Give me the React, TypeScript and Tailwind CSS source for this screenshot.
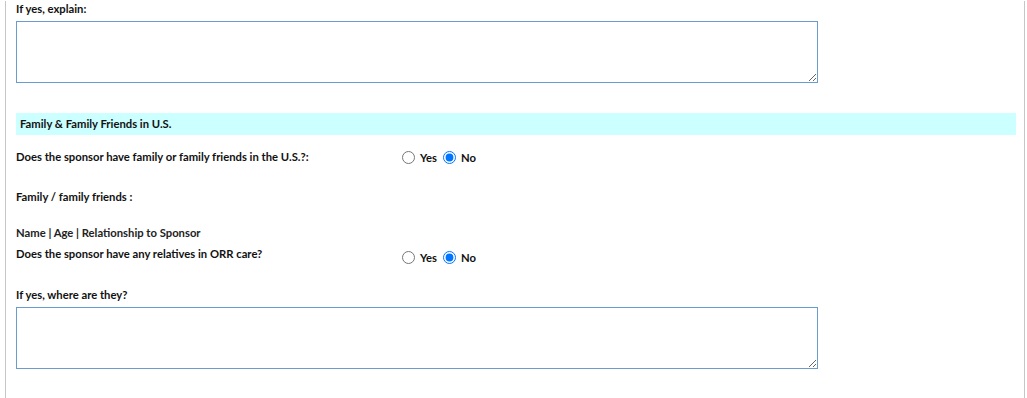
export default function App() {
  const font = { fontFamily: "Lato, 'Liberation Sans', sans-serif" }

  return (
    <div className="min-h-[398px] bg-white" style={font}>
      <div className="ml-[5px] w-[1020px] min-h-[398px] border-x border-[#c6c6c6] pl-[10px] pr-[8px] text-[11.25px] font-bold text-[#111]">
        {/* Explain */}
        <div className="h-[16px] leading-[16px] mt-[1px]">If yes, explain:</div>
        <textarea className="mt-[4px] block w-[802px] h-[62px] border border-[#6a9bd1] outline-none resize" />

        {/* Section header */}
        <div className="mt-[30px] h-[22px] bg-[#ccffff] pl-[4px] leading-[22px]">
          Family &amp; Family Friends in U.S.
        </div>

        <div className="mt-[14px] flex h-[16px] items-center">
          <div className="w-[386px]">Does the sponsor have family or family friends in the U.S.?:</div>
          <label className="flex items-center gap-[5px]">
            <input type="radio" name="fam" className="m-0 h-[13px] w-[13px]" />
            <span className="mt-[2px]">Yes</span>
          </label>
          <label className="ml-[6px] flex items-center gap-[5px]">
            <input type="radio" name="fam" defaultChecked className="m-0 h-[13px] w-[13px]" />
            <span className="mt-[2px]">No</span>
          </label>
        </div>

        <div className="mt-[24px] h-[16px] leading-[16px]">Family / family friends :</div>
        <div className="mt-[20px] h-[16px] leading-[16px] text-[#222]">Name | Age | Relationship to Sponsor</div>

        <div className="mt-[5px] flex h-[16px] items-center">
          <div className="w-[386px]">Does the sponsor have any relatives in ORR care?</div>
          <label className="mt-[6px] flex items-center gap-[5px]">
            <input type="radio" name="orr" className="m-0 h-[13px] w-[13px]" />
            <span className="mt-[2px]">Yes</span>
          </label>
          <label className="mt-[6px] ml-[6px] flex items-center gap-[5px]">
            <input type="radio" name="orr" defaultChecked className="m-0 h-[13px] w-[13px]" />
            <span className="mt-[2px]">No</span>
          </label>
        </div>

        <div className="mt-[25px] h-[16px] leading-[16px]">If yes, where are they?</div>
        <textarea className="mt-[4px] block w-[802px] h-[62px] border border-[#6a9bd1] outline-none resize" />
      </div>
    </div>
  )
}
